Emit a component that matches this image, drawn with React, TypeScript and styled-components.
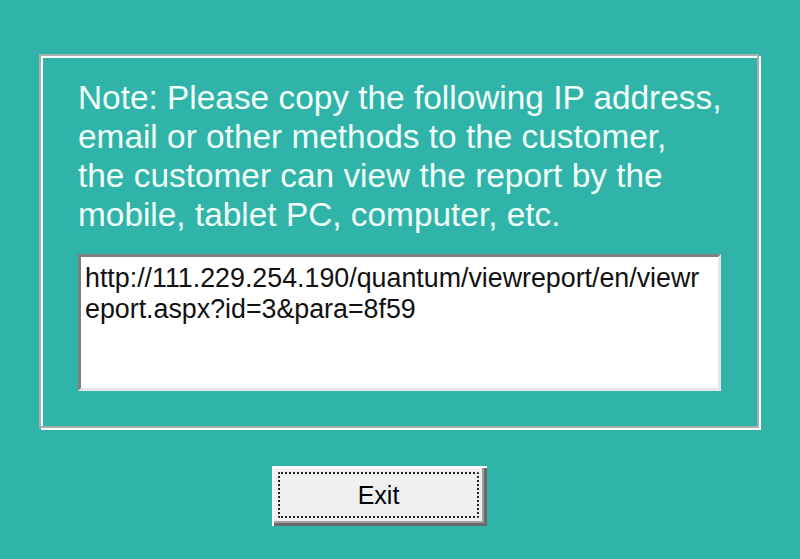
import React from 'react';
import styled, { createGlobalStyle } from 'styled-components';

const GlobalStyle = createGlobalStyle`
  html, body {
    margin: 0;
    padding: 0;
    background: #30b4aa;
  }
  body {
    font-family: "Liberation Sans", Arial, sans-serif;
  }
`;

const Dialog = styled.div`
  width: 800px;
  height: 559px;
  box-sizing: border-box;
  background: #30b4aa;
  padding: 54px 0 0 39px;
  display: flex;
  flex-direction: column;
`;

const GroupBox = styled.div`
  width: 720px;
  height: 374px;
  box-sizing: border-box;
  border: 2px solid #a8aeae;
  box-shadow: inset 2px 2px 0 #ffffff, 2px 2px 0 #ffffff;
  padding: 22px 0 0 37px;
  display: flex;
  flex-direction: column;
`;

const Note = styled.p`
  margin: 0;
  color: #f2fff8;
  font-size: 33.4px;
  line-height: 39px;
  white-space: nowrap;
`;

const UrlBox = styled.div`
  margin-top: 20px;
  width: 643px;
  height: 137px;
  box-sizing: border-box;
  background: #ffffff;
  border-top: 3px solid #7f7f7f;
  border-left: 3px solid #7f7f7f;
  border-right: 3px solid #e6e6e6;
  border-bottom: 3px solid #e6e6e6;
  padding: 6px 4px 0 4px;
  color: #111;
  font-size: 26.8px;
  line-height: 31px;
  word-break: break-all;
`;

const ButtonRow = styled.div`
  padding: 38px 0 0 233px;
`;

const Button = styled.button`
  width: 215px;
  height: 60px;
  box-sizing: border-box;
  background: #f0f0f0;
  border: none;
  box-shadow: inset 2px 2px 0 #ffffff, inset -3px -3px 0 #6b6b6b, inset -5px -5px 0 #a0a0a0;
  padding: 6px 8px 8px 6px;
  font-family: "Liberation Sans", Arial, sans-serif;
  font-size: 25px;
  color: #000;
  cursor: default;
`;

const FocusRing = styled.span`
  display: flex;
  align-items: center;
  justify-content: center;
  height: 100%;
  border: 2px dotted #222;
  border-radius: 2px;
  box-sizing: border-box;
`;

export default function App(): JSX.Element {
  return (
    <Dialog>
      <GlobalStyle />
      <GroupBox>
        <Note>
          Note: Please copy the following IP address,<br />
          email or other methods to the customer,<br />
          the customer can view the report by the<br />
          mobile, tablet PC, computer, etc.
        </Note>
        <UrlBox>http://111.229.254.190/quantum/viewreport/en/viewreport.aspx?id=3&amp;para=8f59</UrlBox>
      </GroupBox>
      <ButtonRow>
        <Button>
          <FocusRing>Exit</FocusRing>
        </Button>
      </ButtonRow>
    </Dialog>
  );
}
